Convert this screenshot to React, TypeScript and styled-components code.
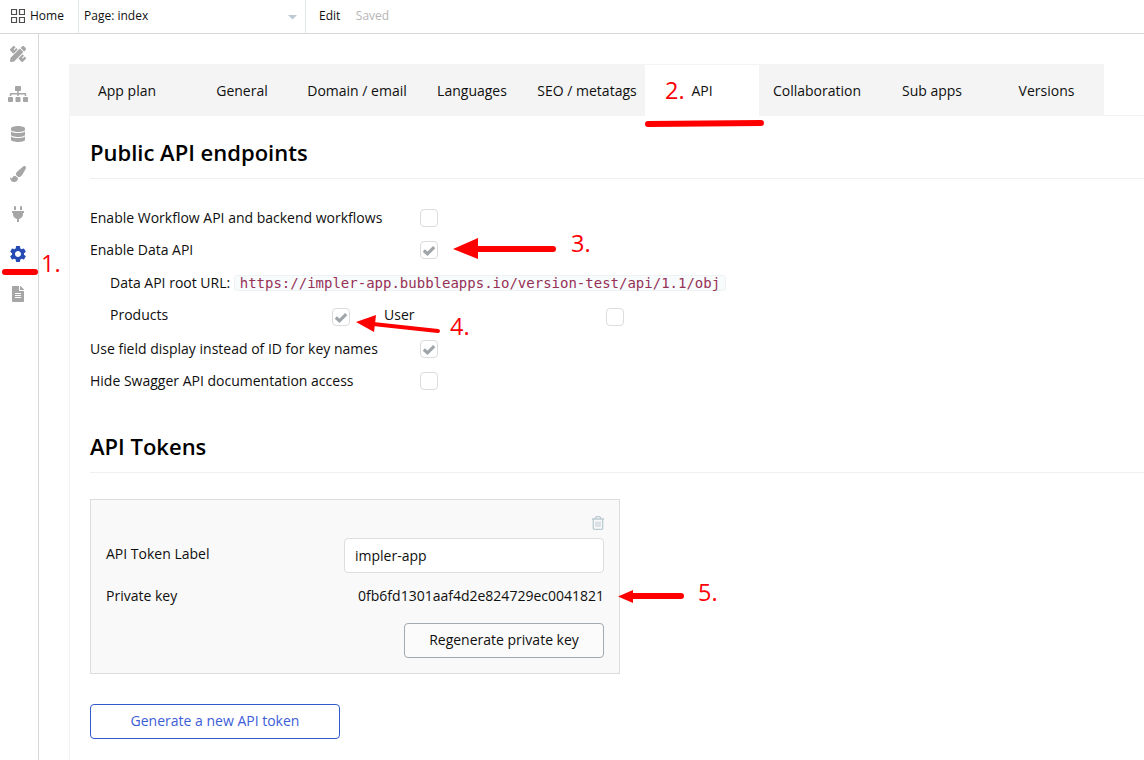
import React from "react";
import styled, { createGlobalStyle } from "styled-components";
import { FaPencilRuler, FaSitemap, FaDatabase, FaPaintBrush, FaPlug, FaFileAlt } from "react-icons/fa";
import { MdSettings } from "react-icons/md";

const GlobalStyle = createGlobalStyle`
  * { box-sizing: border-box; }
  body {
    margin: 0;
    background: #fff;
    color: #0f0f0f;
    font-family: "Open Sans", "Noto Sans", sans-serif;
    font-size: 14px;
    line-height: 20px;
    overflow: hidden;
  }
`;

const Page = styled.div`
  position: relative;
  width: 1144px;
  height: 760px;
  display: flex;
  flex-direction: column;
  overflow: hidden;
`;

const TopBar = styled.header`
  flex: none;
  height: 34px;
  display: flex;
  border-bottom: 1px solid #d5d7d8;
  font-size: 12px;
  line-height: 31px;
`;

const HomeLink = styled.div`
  width: 79px;
  padding-left: 11px;
  display: flex;
  gap: 5px;
  border-right: 1px solid #e4e9ea;
  svg { margin-top: 9px; flex: none; }
`;

const PagePicker = styled.div`
  width: 227px;
  padding: 0 8px 0 5px;
  display: flex;
  justify-content: space-between;
  border-right: 1px solid #e4e9ea;
  svg { margin-top: 15px; }
`;

const MenuItem = styled.span`
  margin-left: 13px;
`;

const SaveState = styled.span`
  margin-left: 15.5px;
  color: #b5b5b5;
`;

const Body = styled.div`
  flex: 1;
  display: flex;
  min-height: 0;
`;

const Sidebar = styled.nav`
  width: 39px;
  flex: none;
  padding: 0 2px 0 0;
  border-right: 1px solid #d5d7d8;
`;

const SideItem = styled.div<{ $active?: boolean }>`
  height: 40px;
  display: flex;
  align-items: center;
  justify-content: center;
  color: ${(p) => (p.$active ? "#264bb5" : "#a6a6a6")};
`;

const Main = styled.main`
  flex: 1;
  min-width: 0;
  padding: 30px 0 0 30px;
  display: flex;
  flex-direction: column;
`;

const TabStrip = styled.div`
  flex: none;
  height: 52px;
  display: flex;
  border-left: 1px solid #f4f4f4;
  box-shadow: inset 0 -1px 0 #f3f3f3;
`;

const Tab = styled.div<{ $active?: boolean }>`
  width: 115px;
  flex: none;
  padding-top: 17px;
  padding-right: 1px;
  text-align: center;
  white-space: nowrap;
  background: ${(p) => (p.$active ? "#fff" : "#f4f4f4")};
  box-shadow: inset 0 1px 0 #f4f4f4;
  &:nth-child(6) { width: 114px; padding-right: 0; }
  &:nth-child(7), &:nth-child(8) { padding-left: 1px; padding-right: 0; }
  &:nth-child(9) { padding-right: 0; }
`;

const Panel = styled.section`
  flex: 1;
  padding: 23px 0 0 20px;
  border-left: 1px solid #f3f3f3;
`;

const Heading = styled.h2<{ $top?: number }>`
  margin: ${(p) => p.$top ?? 0}px 0 0;
  height: 40px;
  font-size: 22px;
  font-weight: 600;
  line-height: 26px;
  color: #000;
  border-bottom: 1px solid #efefef;
`;

const Settings = styled.div`
  padding-top: 23px;
`;

const Row = styled.div<{ $h?: number; $indent?: boolean }>`
  height: ${(p) => p.$h ?? 32}px;
  display: flex;
  align-items: center;
  padding-left: ${(p) => (p.$indent ? 20 : 0)}px;
`;

const Label = styled.span<{ $w?: number }>`
  width: ${(p) => (p.$w ? `${p.$w}px` : "auto")};
  white-space: nowrap;
`;

const CheckFrame = styled.span<{ $drop?: number }>`
  width: 18px;
  height: 18px;
  flex: none;
  margin-top: ${(p) => p.$drop ?? 0}px;
  display: flex;
  align-items: center;
  justify-content: center;
  background: #fff;
  border: 1px solid #dcdcdc;
  border-radius: 4px;
`;

const Url = styled.code`
  margin-left: 4px;
  padding: 0 4.5px;
  height: 16px;
  line-height: 15px;
  font-family: "DejaVu Sans Mono", monospace;
  font-size: 14px;
  color: #963057;
  background: #f8fbfb;
  border: 1px solid #edf2f3;
  border-radius: 3px;
`;

const UserLabel = styled(Label)`
  margin-left: 34px;
`;

const TokenCard = styled.div`
  width: 530px;
  height: 175px;
  margin-top: 26px;
  padding: 16px 15px 0;
  display: flex;
  flex-direction: column;
  background: #f9f9f9;
  border: 1px solid #dcdddd;
`;

const CardTools = styled.div`
  height: 22px;
  display: flex;
  justify-content: flex-end;
`;

const Field = styled.div`
  height: 35px;
  display: flex;
  justify-content: space-between;
`;

const FieldName = styled.span`
  padding-top: 6px;
`;

const TextBox = styled.div`
  width: 260px;
  padding: 0 10px;
  line-height: 33px;
  background: #fff;
  border: 1px solid #dcdddd;
  border-radius: 4px;
`;

const KeyRow = styled.div`
  margin-top: 13px;
  height: 37px;
  display: flex;
  justify-content: space-between;
`;

const Button = styled.button<{ $primary?: boolean }>`
  display: block;
  width: ${(p) => (p.$primary ? 250 : 200)}px;
  height: 35px;
  padding: 0 0 1px;
  align-self: flex-end;
  margin-top: ${(p) => (p.$primary ? 30 : 0)}px;
  font: inherit;
  color: ${(p) => (p.$primary ? "#3d5dd8" : "#0f0f0f")};
  background: ${(p) => (p.$primary ? "#fff" : "#fbfbfb")};
  border: 1px solid ${(p) => (p.$primary ? "#305ace" : "#9eabb2")};
  border-radius: 4px;
`;

const Markup = styled.svg`
  position: absolute;
  left: 0;
  top: 0;
  pointer-events: none;
`;

const Step = styled.span<{ $x: number; $y: number }>`
  position: absolute;
  left: ${(p) => p.$x}px;
  top: ${(p) => p.$y}px;
  font-size: 23.5px;
  line-height: 30px;
  color: #fb0007;
`;

const Check = ({ on, drop }: { on?: boolean; drop?: number }) => (
  <CheckFrame $drop={drop}>
    {on && (
      <svg width="14" height="12" viewBox="0 0 14 12">
        <path d="M1.8 6.500 L5.500 9.800 L12.200 3.200" fill="none" stroke="#9fa5a8" strokeWidth="3.2" />
      </svg>
    )}
  </CheckFrame>
);

const tabs = ["App plan", "General", "Domain / email", "Languages", "SEO / metatags", "API", "Collaboration", "Sub apps", "Versions"];

const sideIcons = [
  { Icon: FaPencilRuler, size: 16 },
  { Icon: FaSitemap, size: 20 },
  { Icon: FaDatabase, size: 16 },
  { Icon: FaPaintBrush, size: 16 },
  { Icon: FaPlug, size: 16 },
  { Icon: MdSettings, size: 20, active: true },
  { Icon: FaFileAlt, size: 16 },
];

const steps = [
  { n: 1, x: 41, y: 248 },
  { n: 2, x: 665, y: 75 },
  { n: 3, x: 571, y: 228 },
  { n: 4, x: 450, y: 311 },
  { n: 5, x: 698, y: 577 },
];

export default function App() {
  return (
    <Page>
      <GlobalStyle />
      <TopBar>
        <HomeLink>
          <svg width="14" height="14" viewBox="0 0 14 14" fill="none" stroke="#4b4b4b">
            <path d="M.5.5h5v5h-5zM8.500.5h5v5h-5zM.5 8.500h5v5h-5zM8.500 8.500h5v5h-5z" strokeWidth="1.2" />
          </svg>
          Home
        </HomeLink>
        <PagePicker>
          Page: index
          <svg width="9" height="5" viewBox="0 0 9 5"><path d="M0 0h9L4.500 4.500z" fill="#bccbd2" /></svg>
        </PagePicker>
        <MenuItem>Edit</MenuItem>
        <SaveState>Saved</SaveState>
      </TopBar>
      <Body>
        <Sidebar>
          {sideIcons.map(({ Icon, size, active }, i) => (
            <SideItem key={i} $active={active}><Icon size={size} /></SideItem>
          ))}
        </Sidebar>
        <Main>
          <TabStrip>
            {tabs.map((t) => <Tab key={t} $active={t === "API"}>{t}</Tab>)}
          </TabStrip>
          <Panel>
            <Heading>Public API endpoints</Heading>
            <Settings>
              <Row><Label $w={330}>Enable Workflow API and backend workflows</Label><Check /></Row>
              <Row><Label $w={330}>Enable Data API</Label><Check on /></Row>
              <Row $h={34} $indent>
                <Label>Data API root URL:</Label>
                <Url>https://impler-app.bubbleapps.io/version-test/api/1.1/obj</Url>
              </Row>
              <Row $h={30} $indent>
                <Label $w={222}>Products</Label><Check on drop={3} />
                <UserLabel $w={222}>User</UserLabel><Check drop={3} />
              </Row>
              <Row $h={37}><Label $w={330}>Use field display instead of ID for key names</Label><Check on /></Row>
              <Row $h={28}><Label $w={330}>Hide Swagger API documentation access</Label><Check /></Row>
            </Settings>
            <Heading $top={38}>API Tokens</Heading>
            <TokenCard>
              <CardTools>
                <svg width="12" height="14" viewBox="0 0 12 14" fill="none" stroke="#bccbd2">
                  <path d="M0 3h12M3.500 3V1.500L4.500.6h3l1 .9V3M1.300 3v9.500l.7.9h8l.7-.9V3" strokeWidth="1.3" />
                  <path d="M4 5.500v5.500M6 5.500v5.500M8 5.500v5.500" />
                </svg>
              </CardTools>
              <Field><FieldName>API Token Label</FieldName><TextBox>impler-app</TextBox></Field>
              <KeyRow><span>Private key</span><span>0fb6fd1301aaf4d2e824729ec0041821</span></KeyRow>
              <Button>Regenerate private key</Button>
            </TokenCard>
            <Button $primary>Generate a new API token</Button>
          </Panel>
        </Main>
      </Body>
      <Markup width="1144" height="760" viewBox="0 0 1144 760" stroke="#fe0000" fill="#fe0000" strokeLinecap="round">
        <path d="M5 272H35" strokeWidth="6" />
        <path d="M648 124L761 123" strokeWidth="6" />
        <path d="M475 249H553" strokeWidth="6" />
        <path d="M453 249L478 238V259Z" stroke="none" />
        <path d="M373 324L438 331" strokeWidth="4" />
        <path d="M356 322L376 315L374 332Z" stroke="none" />
        <path d="M630 596H681" strokeWidth="6" />
        <path d="M618 596.500L633 590V603Z" stroke="none" />
      </Markup>
      {steps.map((s) => <Step key={s.n} $x={s.x} $y={s.y}>{s.n}.</Step>)}
    </Page>
  );
}
